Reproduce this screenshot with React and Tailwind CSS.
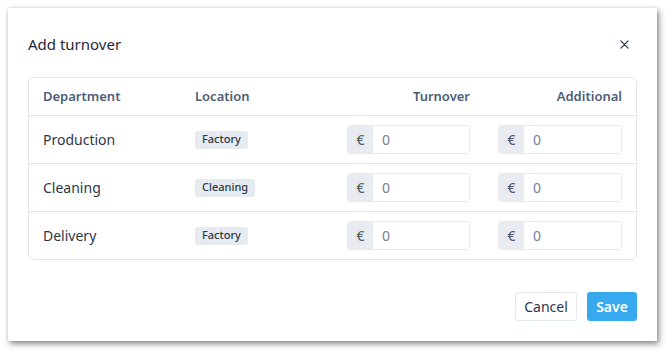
import React from 'react';

const rows = [
  { name: 'Production', location: 'Factory' },
  { name: 'Cleaning', location: 'Cleaning' },
  { name: 'Delivery', location: 'Factory' },
];

const MoneyInput = () => (
  <div className="flex h-[29px] w-full rounded-[3px] border border-[#e6eaf0] overflow-hidden">
    <div className="flex w-[25px] shrink-0 items-center justify-center bg-[#e8ebf0] text-[14px] text-[#4a5568]">€</div>
    <input
      defaultValue="0"
      size={1}
      className="w-full min-w-0 flex-1 bg-white pl-[9px] text-[14px] text-[#718096] outline-none"
    />
  </div>
);

const App = () => {
  return (
    <div className="h-[355px] w-[670px] bg-white pl-[8px] pt-[8px]" style={{ fontFamily: '"Noto Sans", "Open Sans", sans-serif' }}>
      <div className="flex h-[333px] w-[649px] flex-col bg-white px-5 pb-5 pt-5 shadow-[2px_3px_6px_rgba(0,0,0,0.45),0_0_3px_rgba(0,0,0,0.12)]">
        {/* Header */}
        <div className="flex h-[32px] items-center justify-between">
          <h2 className="text-[15px] font-normal text-[#1f2937]">Add turnover</h2>
          <button className="mr-[8px] text-[#2d3748]">
            <svg width="9" height="9" viewBox="0 0 10 10" stroke="currentColor" strokeWidth="1.4" strokeLinecap="round">
              <path d="M1 1L9 9M9 1L1 9" />
            </svg>
          </button>
        </div>

        {/* Table */}
        <div className="mt-[17px] rounded-[5px] border border-[#e3e8ef]">
          <div className="grid h-[38px] grid-cols-[152px_152px_151px_minmax(0,1fr)] items-center border-b border-[#e3e8ef] text-[13px] font-semibold text-[#4e5d78]">
            <div className="px-[14px]">Department</div>
            <div className="px-[14px]">Location</div>
            <div className="px-[14px] text-right">Turnover</div>
            <div className="px-[14px] text-right">Additional</div>
          </div>
          {rows.map((row, idx) => (
            <div
              key={row.name}
              className={`grid grid-cols-[152px_152px_151px_minmax(0,1fr)] items-center ${idx < rows.length - 1 ? 'h-[48px] border-b border-[#e3e8ef]' : 'h-[47px]'}`}
            >
              <div className="px-[14px] text-[14px] text-[#2d3748]">{row.name}</div>
              <div className="flex px-[14px]">
                <span className="flex h-[18px] items-center rounded-[3px] bg-[#e6ebf2] px-[7px] text-[11px] font-medium text-[#2d3748]">
                  {row.location}
                </span>
              </div>
              <div className="px-[14px]">
                <MoneyInput />
              </div>
              <div className="px-[14px]">
                <MoneyInput />
              </div>
            </div>
          ))}
        </div>

        {/* Footer */}
        <div className="mt-auto flex justify-end gap-[10px]">
          <button className="h-[29px] w-[62px] rounded-[3px] border border-[#e3e8ef] bg-white text-[14px] text-[#2d3748]">Cancel</button>
          <button className="h-[29px] w-[50px] rounded-[3px] bg-[#36a9ef] text-[14px] font-semibold text-white">Save</button>
        </div>
      </div>
    </div>
  );
};

export default App;
